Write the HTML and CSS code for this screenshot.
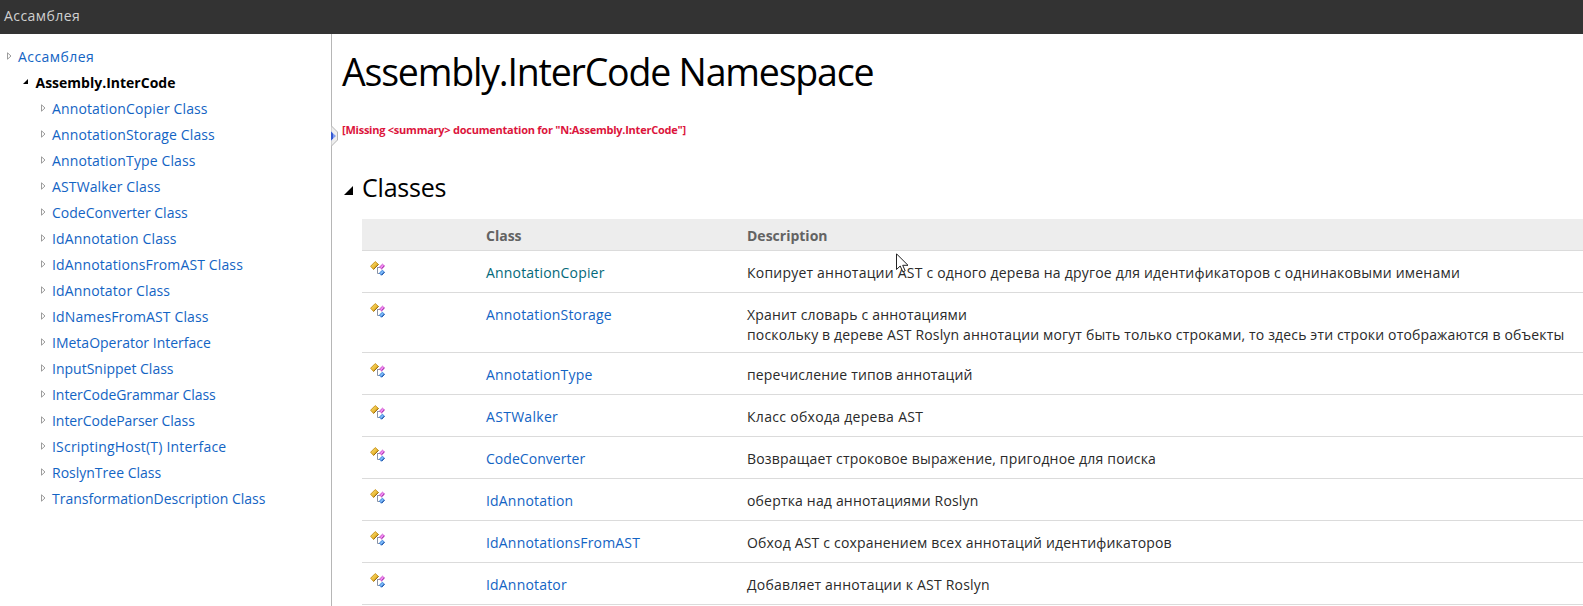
FILE: index.html
```
<!DOCTYPE html>
<html lang="ru">
<head>
<meta charset="utf-8">
<title>Assembly.InterCode Namespace</title>
<link rel="stylesheet" href="styles.css">
</head>
<body>
<svg class="defs" width="0" height="0" aria-hidden="true">
  <defs>
    <linearGradient id="gold" x1="0" y1="0" x2="1" y2="1"><stop offset="0" stop-color="#ffe680"/><stop offset="1" stop-color="#d99a00"/></linearGradient>
    <symbol id="cls" viewBox="0 0 15 15">
      <path d="M7 6.5H10M7.5 6.5V12.5H10" fill="none" stroke="#8a93a5"/>
      <path d="M0.6 5.2L5.2 0.6L8.4 3.4L3.6 8.4Z" fill="url(#gold)" stroke="#c89420"/>
      <path d="M3.6 8.4L8.4 3.4" stroke="#9a6a10"/>
      <path d="M9.6 6L12.5 3.2L14.4 5L11.5 7.8Z" fill="#f08af0" stroke="#cf4fd0"/>
      <path d="M11.5 7.8L14.4 5" stroke="#9c2ba0"/>
      <path d="M9.4 12L12.5 9.2L14.4 11.2L11.5 14.2Z" fill="#7ab8f8" stroke="#3c84dc"/>
      <path d="M11.5 14.2L14.4 11.2" stroke="#0c3d91"/>
    </symbol>
    <symbol id="closed" viewBox="0 0 5 8"><path d="M.5 .8V7.2L4 4Z" fill="#fff" stroke="#929292" stroke-width=".9"/></symbol>
    <symbol id="open" viewBox="0 0 10 10"><path d="M0 10H10V0Z" fill="#000"/></symbol>
  </defs>
</svg>
<header class="topbar">Ассамблея</header>
<div class="layout">
  <nav class="tree">
    <div class="node root"><svg class="arrow"><use href="#closed"/></svg><a>Ассамблея</a></div>
    <div class="node current"><svg class="arrow-open"><use href="#open"/></svg><b>Assembly.InterCode</b></div>
    <div class="node loose"><svg class="arrow"><use href="#closed"/></svg><a>AnnotationCopier Class</a></div>
    <div class="node loose"><svg class="arrow"><use href="#closed"/></svg><a>AnnotationStorage Class</a></div>
    <div class="node loose"><svg class="arrow"><use href="#closed"/></svg><a>AnnotationType Class</a></div>
    <div class="node loose"><svg class="arrow"><use href="#closed"/></svg><a>ASTWalker Class</a></div>
    <div class="node"><svg class="arrow"><use href="#closed"/></svg><a>CodeConverter Class</a></div>
    <div class="node loose"><svg class="arrow"><use href="#closed"/></svg><a>IdAnnotation Class</a></div>
    <div class="node loose"><svg class="arrow"><use href="#closed"/></svg><a>IdAnnotationsFromAST Class</a></div>
    <div class="node loose"><svg class="arrow"><use href="#closed"/></svg><a>IdAnnotator Class</a></div>
    <div class="node loose"><svg class="arrow"><use href="#closed"/></svg><a>IdNamesFromAST Class</a></div>
    <div class="node"><svg class="arrow"><use href="#closed"/></svg><a>IMetaOperator Interface</a></div>
    <div class="node"><svg class="arrow"><use href="#closed"/></svg><a>InputSnippet Class</a></div>
    <div class="node tight"><svg class="arrow"><use href="#closed"/></svg><a>InterCodeGrammar Class</a></div>
    <div class="node tight"><svg class="arrow"><use href="#closed"/></svg><a>InterCodeParser Class</a></div>
    <div class="node wide"><svg class="arrow"><use href="#closed"/></svg><a>IScriptingHost(T) Interface</a></div>
    <div class="node"><svg class="arrow"><use href="#closed"/></svg><a>RoslynTree Class</a></div>
    <div class="node"><svg class="arrow"><use href="#closed"/></svg><a>TransformationDescription Class</a></div>
  </nav>
  <main class="content">
    <svg class="handle" viewBox="0 0 7 22"><path d="M0 .5L6.5 7V15L0 21.5Z" fill="#eee" stroke="#b4b4b4"/><path d="M0 6.5L5 11L0 15.5Z" fill="#7f9bee"/><path d="M0 6.5L2 8.5V13.5L0 15.5Z" fill="#3358d0"/></svg>
    <h1 class="title">Assembly.InterCode Namespace</h1>
    <p class="missing">[Missing &lt;summary&gt; documentation for "N:Assembly.InterCode"]</p>
    <h2 class="section"><svg class="toggle"><use href="#open"/></svg><span>Classes</span></h2>
    <div class="table">
      <div class="row head"><span></span><span>Class</span><span>Description</span></div>
      <div class="row"><svg class="icon"><use href="#cls"/></svg><a class="hover">AnnotationCopier</a><span class="first">Копирует аннотации AST с одного дерева на другое для идентификаторов с однинаковыми именами</span></div>
      <div class="row"><svg class="icon"><use href="#cls"/></svg><a>AnnotationStorage</a><span>Хранит словарь с аннотациями<br><span class="long">поскольку в дереве AST Roslyn аннотации могут быть только строками, то здесь эти строки отображаются в объекты</span></span></div>
      <div class="row"><svg class="icon"><use href="#cls"/></svg><a>AnnotationType</a><span class="long">перечисление типов аннотаций</span></div>
      <div class="row"><svg class="icon"><use href="#cls"/></svg><a class="spaced">ASTWalker</a><span class="spaced">Класс обхода дерева AST</span></div>
      <div class="row"><svg class="icon"><use href="#cls"/></svg><a class="snug">CodeConverter</a><span>Возвращает строковое выражение, пригодное для поиска</span></div>
      <div class="row"><svg class="icon"><use href="#cls"/></svg><a>IdAnnotation</a><span>обертка над аннотациями Roslyn</span></div>
      <div class="row"><svg class="icon"><use href="#cls"/></svg><a>IdAnnotationsFromAST</a><span>Обход AST с сохранением всех аннотаций идентификаторов</span></div>
      <div class="row"><svg class="icon"><use href="#cls"/></svg><a>IdAnnotator</a><span class="first">Добавляет аннотации к AST Roslyn</span></div>
    </div>
  </main>
</div>
<svg class="cursor" viewBox="0 0 13 20"><path d="M.5 .8V16.5L4.2 13L6.8 18.8L9.2 17.8L6.7 12.3H12Z" fill="#fff" stroke="#222"/></svg>
</body>
</html>
```
FILE: styles.css
```
* { box-sizing: border-box; }
body { margin: 0; height: 606px; overflow: hidden; background: #fff; color: #2a2a2a; font: 14px/20px "Open Sans", "Noto Sans", sans-serif; white-space: nowrap; display: flex; flex-direction: column; }
.defs { position: absolute; }
a { color: #1364c4; }
.topbar { height: 34px; flex: none; background: #333; color: #d0d0d0; padding: 6px 4px; letter-spacing: .45px; }
.layout { flex: 1; display: flex; min-height: 0; }
.tree { width: 332px; flex: none; border-right: 1px solid #b6b6b6; padding-top: 10px; }
.node { height: 26px; line-height: 26px; display: flex; padding-left: 41px; }
.node.root { padding-left: 7px; letter-spacing: .45px; }
.node.current { padding-left: 23px; color: #000; }
.node.loose { letter-spacing: .13px; }
.node.wide { letter-spacing: .2px; }
.node.tight { letter-spacing: -.06px; }
.arrow { width: 5px; height: 8px; margin: 8px 6px 0 0; flex: none; }
.arrow-open { width: 5px; height: 5px; margin: 9px 7.5px 0 0; flex: none; }
.content { flex: 1; position: relative; padding-left: 10px; min-width: 0; }
.handle { position: absolute; left: -1px; top: 91px; width: 7px; height: 22px; }
.title { margin: 12px 0 0; font-size: 37.5px; line-height: 52px; font-weight: 400; letter-spacing: -1.2px; color: #000; }
.missing { margin: 22px 0 0; font-size: 11px; line-height: 20px; font-weight: 700; letter-spacing: -.24px; color: #dc143c; }
.section { margin: 27px 0 0; height: 52px; display: flex; font-size: 25px; line-height: 40px; font-weight: 400; letter-spacing: -.2px; color: #000; }
.toggle { width: 9px; height: 9px; margin: 19px 9px 0 2px; }
.table { margin-left: 20px; }
.row { display: grid; grid-template-columns: 116px 261px 1fr; min-height: 42px; padding: 12px 0 7px 8px; border-bottom: 1px solid #dbdbdb; letter-spacing: .18px; }
.row.head { min-height: 0; height: 32px; padding-top: 7px; padding-bottom: 0; background: #ededed; color: #636363; font-weight: 700; letter-spacing: 0; }
.icon { width: 15px; height: 15px; margin-top: -2px; }
.hover { color: #03697a; }
.first { letter-spacing: .21px; }
.long { letter-spacing: .15px; }
.spaced { letter-spacing: .3px; }
.snug { letter-spacing: .04px; }
.cursor { position: absolute; left: 896px; top: 253px; width: 13px; height: 20px; }
```
